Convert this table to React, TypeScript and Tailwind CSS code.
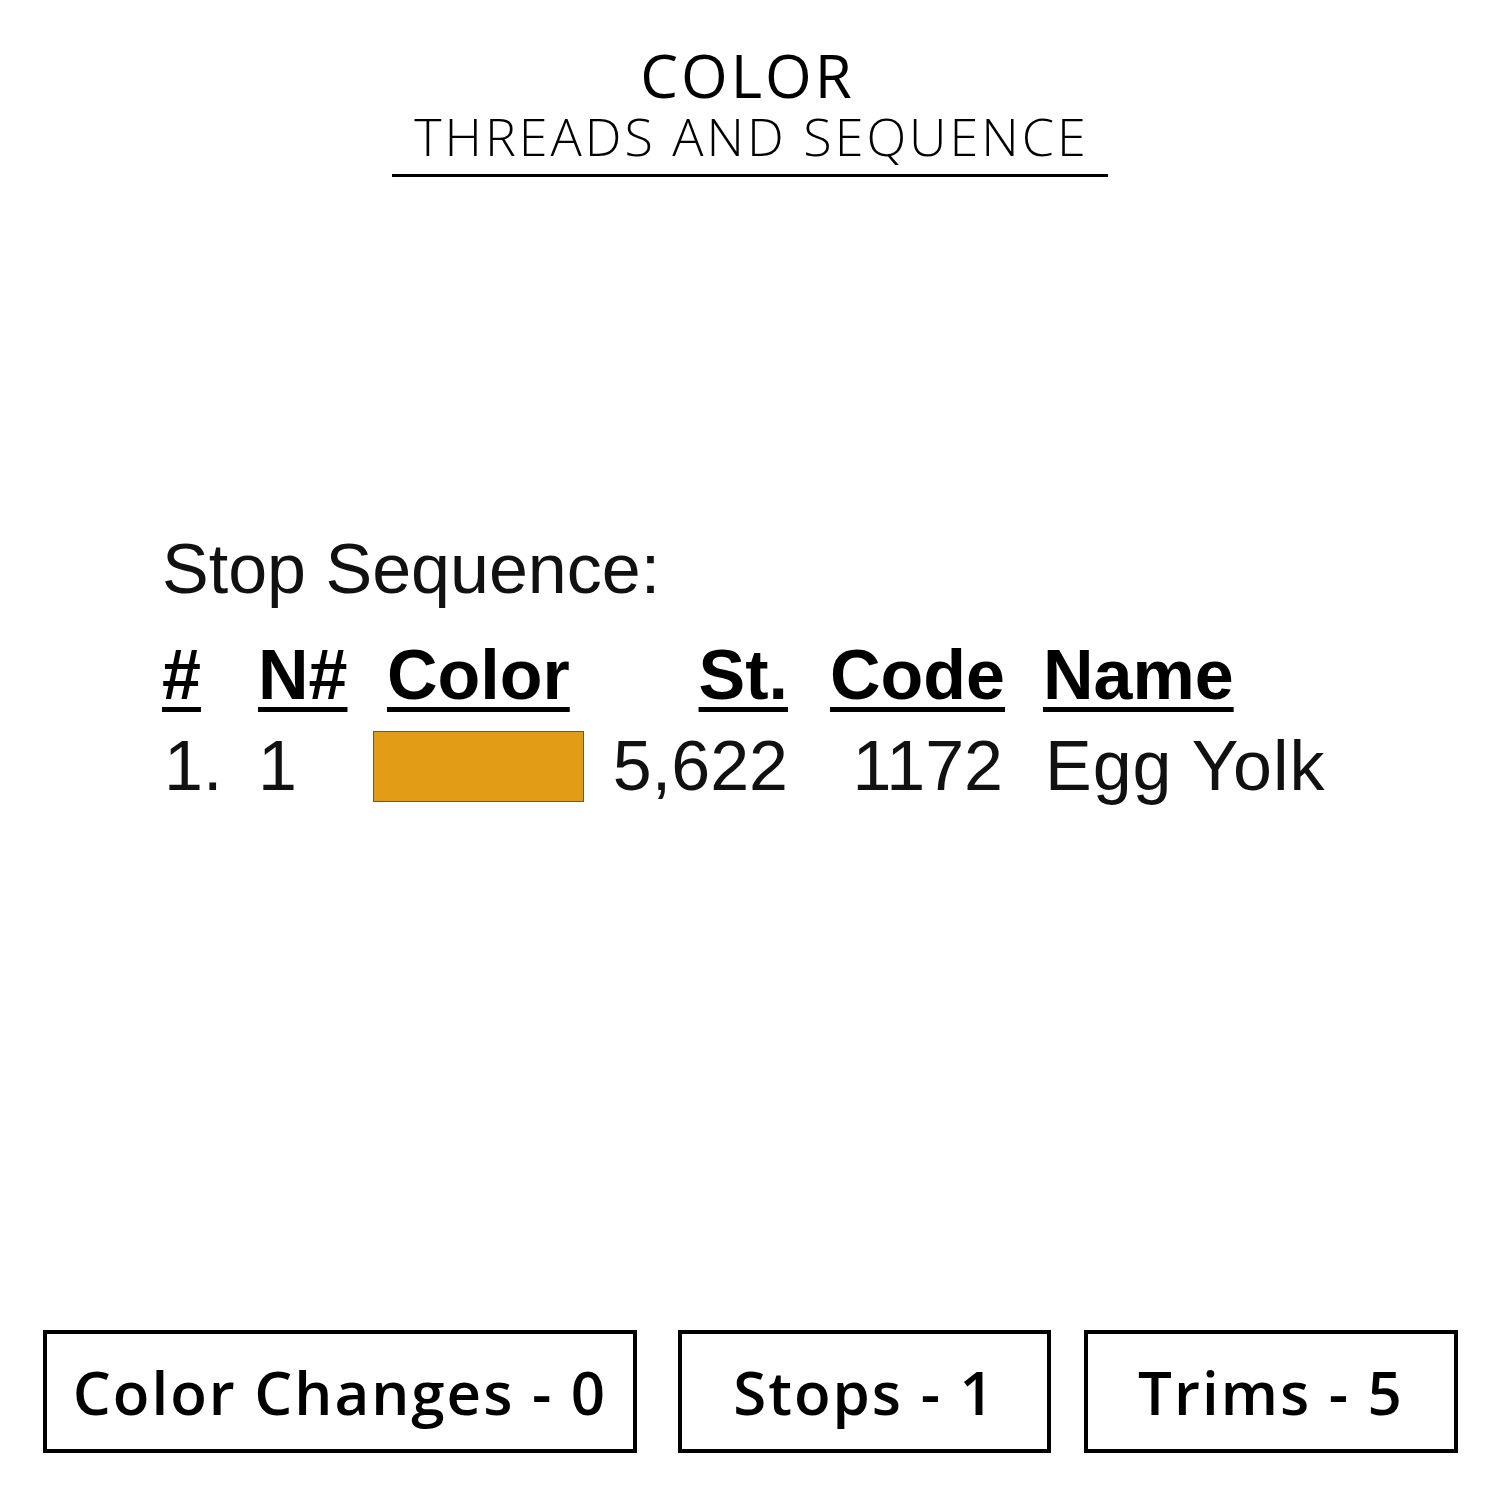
import React from 'react'

const HEAD = [
  { label: '#', cell: 'w-[96px] text-left' },
  { label: 'N#', cell: 'w-[115px] text-left' },
  { label: 'Color', cell: 'w-[211px] text-left pl-[14px]' },
  { label: 'St.', cell: 'w-[204px] text-right' },
  { label: 'Code', cell: 'w-[217px] text-right' },
  { label: 'Name', cell: 'pl-[38px] text-left' },
]

const STATS = [
  { label: 'Color Changes - 0', w: 'w-[594px]' },
  { label: 'Stops - 1', w: 'w-[373px]' },
  { label: 'Trims - 5', w: 'w-[374px]' },
]

export default function App() {
  return (
    <div className="w-[1500px] h-[1500px] bg-white flex flex-col items-center text-black">
      {/* title */}
      <div className="mt-[42px] flex flex-col items-center font-['Open_Sans',sans-serif]">
        <div className="text-[60px] leading-[66px] font-medium tracking-[3px] pl-[3px] -translate-x-[4px]">COLOR</div>
        <div className="text-[52px] leading-[56px] font-light tracking-[3px] pl-[3px]">THREADS AND SEQUENCE</div>
        <div className="w-[716px] h-[3px] bg-black mt-[10px]" />
      </div>

      {/* stop sequence table */}
      <div className="self-start ml-[162px] mt-[352px] font-['Liberation_Sans',Arial,sans-serif]">
        <div className="text-[70px] leading-[80px] text-[#111]">Stop Sequence:</div>
        <div className="flex items-end mt-[26px]">
          {HEAD.map(h => (
            <div key={h.label} className={h.cell}>
              <span className="text-[70px] leading-[80px] font-bold underline decoration-[5px] underline-offset-[8px]">{h.label}</span>
            </div>
          ))}
        </div>
        <div className="flex items-center mt-[11px] text-[70px] leading-[80px] text-[#111]">
          <div className="w-[96px] pl-[2px]">1.</div>
          <div className="w-[115px]">1</div>
          <div className="w-[211px] h-[71px] bg-[#e29c16] border border-[#6b5a2a]" />
          <div className="w-[204px] text-right">5,622</div>
          <div className="w-[217px] text-right pr-[2px]">1172</div>
          <div className="pl-[40px] tracking-[1px]">Egg Yolk</div>
        </div>
      </div>

      {/* stats */}
      <div className="mt-auto mb-[47px] self-start ml-[43px] flex">
        {STATS.map((s, i) => (
          <div key={s.label}
            className={`${s.w} h-[123px] border-[4px] border-black flex items-center justify-center ${i === 1 ? 'ml-[41px]' : ''} ${i === 2 ? 'ml-[33px]' : ''}`}>
            <span className="font-['Open_Sans',sans-serif] font-semibold text-[60px] leading-none tracking-[2px]">{s.label}</span>
          </div>
        ))}
      </div>
    </div>
  )
}
